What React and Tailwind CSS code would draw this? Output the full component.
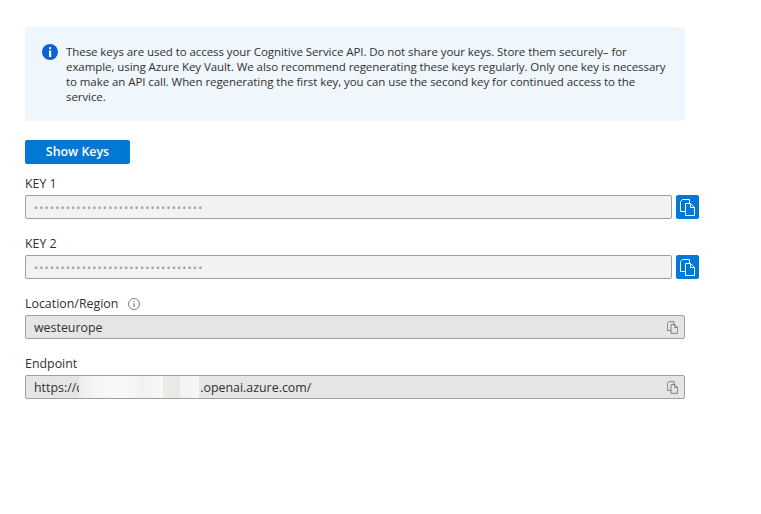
import React from 'react';

const CopyIcon = ({ className }) => (
    <svg className={className} viewBox="0 0 15 17" fill="none" stroke="currentColor" strokeWidth="1">
        <path d="M9.5 4.5V0.5H2.5L0.5 2.5V12.5H5.5" />
        <path d="M5.5 4.5H10.5L14.5 8.5V16.5H5.5Z" />
        <path d="M10.5 4.5V8.5H14.5" />
    </svg>
);

const SecretRow = ({ label }) => (
    <div className="flex flex-col">
        <label className="h-[20px] text-[12.4px] leading-[16px] pt-[1px] text-[#323130]">{label}</label>
        <div className="flex items-stretch gap-[4px] h-[24px]">
            <div className="w-[647px] flex items-center pl-[8px] bg-[#f3f2f1] border border-[#a19f9d] rounded-[2px]">
                <span className="text-[#a19f9d] text-[11px] leading-none tracking-[1.16px] whitespace-nowrap">{'•'.repeat(32)}</span>
            </div>
            <button className="w-[23px] flex items-center justify-center bg-[#0078d4] text-white rounded-[2px]">
                <CopyIcon className="w-[15px] h-[17px]" />
            </button>
        </div>
    </div>
);

const ReadOnlyRow = ({ label, extra, children }) => (
    <div className="flex flex-col">
        <div className="h-[20px] flex items-start gap-[10px] pt-[1px] text-[12.4px] leading-[16px] text-[#323130]">
            {label}
            {extra}
        </div>
        <div className="w-[660px] h-[24px] flex items-center justify-between pl-[8px] pr-[6px] bg-[#e5e5e5] border border-[#a19f9d] rounded-[2px]">
            <div className="flex items-center h-[22px] text-[12.4px] text-[#323130]">{children}</div>
            <CopyIcon className="w-[11px] h-[13px] text-[#605e5c]" />
        </div>
    </div>
);

export default function App() {
    return (
        <div className="w-[761px] h-[514px] bg-white pt-[27px] pl-[25px] font-['Open_Sans',sans-serif] overflow-hidden">
            {/* aviso */}
            <div className="w-[660px] h-[94px] bg-[#eff6fc] rounded-[2px] pt-[17px] pl-[17px] flex gap-[8px]">
                <svg className="w-[16px] h-[16px] shrink-0" viewBox="0 0 16 16">
                    <circle cx="8" cy="8" r="8" fill="#0f62d6" />
                    <rect x="7" y="3" width="2.2" height="2.2" rx="1" fill="#fff" />
                    <rect x="7" y="6.5" width="2.2" height="6.5" fill="#fff" />
                </svg>
                <p className="text-[11.5px] leading-[15px] tracking-[-0.07px] text-[#323130] whitespace-nowrap">
                    These keys are used to access your Cognitive Service API. Do not share your keys. Store them securely– for<br />
                    example, using Azure Key Vault. We also recommend regenerating these keys regularly. Only one key is necessary<br />
                    to make an API call. When regenerating the first key, you can use the second key for continued access to the<br />
                    service.
                </p>
            </div>

            <button className="mt-[19px] block w-[105px] h-[24px] bg-[#0078d4] text-white text-[12.4px] font-semibold rounded-[2px]">
                Show Keys
            </button>

            <div className="mt-[11px] flex flex-col gap-[16px]">
                <SecretRow label="KEY 1" />
                <SecretRow label="KEY 2" />
                <ReadOnlyRow
                    label="Location/Region"
                    extra={
                        <svg className="w-[12px] h-[12px] mt-[2px] text-[#605e5c]" viewBox="0 0 12 12" fill="none" stroke="currentColor">
                            <circle cx="6" cy="6" r="5.5" strokeWidth="0.8" />
                            <path d="M6 5.2V9M6 3V4" strokeWidth="1" />
                        </svg>
                    }
                >
                    <span className="pt-[2px]">westeurope</span>
                </ReadOnlyRow>
                <ReadOnlyRow label="Endpoint">
                    <span className="pt-[2px]">https://c</span>
                    {/* trecho borrado do endpoint */}
                    <div className="relative -ml-[3px] mr-[1px] flex h-[22px] w-[120px]">
                        <div className="w-[16px] bg-gradient-to-r from-[#ececec] to-[#f6f6f6]" />
                        <div className="w-[28px] bg-gradient-to-r from-[#f6f6f6] to-[#f9f9f8]" />
                        <div className="w-[20px] bg-gradient-to-r from-[#f9f9f8] to-[#f1f1ee]" />
                        <div className="w-[20px] bg-gradient-to-r from-[#f3f3f1] to-[#f7f7f6]" />
                        <div className="w-[17px] bg-gradient-to-r from-[#ecebe8] to-[#e9e8e5]" />
                        <div className="w-[19px] bg-gradient-to-r from-[#f2f2f1] to-[#f8f8f8]" />
                    </div>
                    <span className="pt-[2px]">.openai.azure.com/</span>
                </ReadOnlyRow>
            </div>
        </div>
    );
}
